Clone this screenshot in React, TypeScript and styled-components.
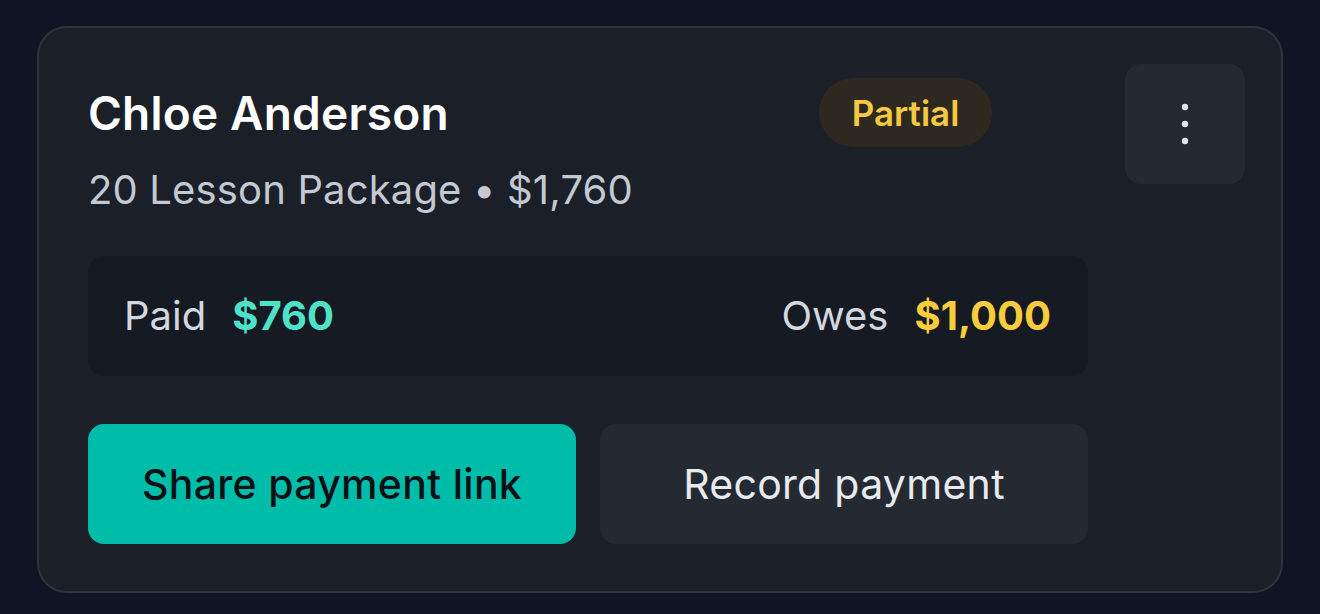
import React from "react";
import styled, { createGlobalStyle } from "styled-components";

const Global = createGlobalStyle`
  html, body { margin: 0; padding: 0; }
  body {
    background: #0f1524;
    font-family: Inter, "Noto Sans", "Liberation Sans", sans-serif;
    -webkit-font-smoothing: antialiased;
  }
`;

const Page = styled.div`
  width: 1320px;
  height: 614px;
  box-sizing: border-box;
  padding: 26px 37px 21px 37px;
  background: #0f1524;
`;

const Card = styled.div`
  box-sizing: border-box;
  height: 567px;
  display: flex;
  align-items: flex-start;
  gap: 37px;
  padding: 36px 36px 47px 49px;
  background: #1b1f27;
  border: 2px solid #2e333c;
  border-radius: 30px;
`;

const Main = styled.div`
  width: 1000px;
  display: flex;
  flex-direction: column;
  padding-top: 14px;
`;

const Header = styled.div`
  display: flex;
  align-items: flex-start;
  justify-content: space-between;
`;

const Info = styled.div`
  display: flex;
  flex-direction: column;
  padding-top: 10px;
`;

const Name = styled.div`
  font-size: 46px;
  line-height: 50px;
  font-weight: 600;
  color: #ffffff;
  letter-spacing: 0.2px;
`;

const Sub = styled.div`
  margin-top: 28px;
  font-size: 40px;
  line-height: 48px;
  font-weight: 400;
  color: #c3c8d1;
  letter-spacing: 0.15px;
`;

const Badge = styled.div`
  margin-right: 96px;
  height: 69px;
  width: 173px;
  box-sizing: border-box;
  border-radius: 35px;
  background: #2e2920;
  color: #f6c940;
  font-size: 35px;
  font-weight: 600;
  display: flex;
  align-items: center;
  justify-content: center;
`;

const Summary = styled.div`
  margin-top: 42px;
  height: 120px;
  box-sizing: border-box;
  padding: 0 37px 0 36px;
  border-radius: 16px;
  background: #161a22;
  display: flex;
  align-items: center;
  justify-content: space-between;
`;

const Stat = styled.div`
  display: flex;
  align-items: baseline;
  gap: 26px;
  font-size: 40px;
  line-height: 48px;
`;

const Label = styled.span`
  color: #d3d7df;
  font-weight: 400;
`;

const Amount = styled.span<{ $tone: "teal" | "yellow" }>`
  font-weight: 700;
  color: ${(p) => (p.$tone === "teal" ? "#4fe2ca" : "#f7cd3c")};
`;

const Actions = styled.div`
  margin-top: 48px;
  display: grid;
  grid-template-columns: 1fr 1fr;
  gap: 24px;
`;

const Button = styled.button<{ $primary?: boolean }>`
  height: 120px;
  border: none;
  border-radius: 16px;
  font-family: inherit;
  font-size: 41px;
  letter-spacing: 0.3px;
  font-weight: ${(p) => (p.$primary ? 500 : 400)};
  background: ${(p) => (p.$primary ? "#00bda9" : "#252a32")};
  color: ${(p) => (p.$primary ? "#0b1014" : "#e8eaee")};
  cursor: pointer;
`;

const MenuButton = styled.button`
  flex: none;
  width: 120px;
  height: 120px;
  border: none;
  border-radius: 16px;
  background: #252a32;
  display: flex;
  align-items: center;
  justify-content: center;
  padding: 0;
`;

export default function App() {
  return (
    <>
      <Global />
      <Page>
        <Card>
          <Main>
            <Header>
              <Info>
                <Name>Chloe Anderson</Name>
                <Sub>20 Lesson Package • $1,760</Sub>
              </Info>
              <Badge>Partial</Badge>
            </Header>
            <Summary>
              <Stat>
                <Label>Paid</Label>
                <Amount $tone="teal">$760</Amount>
              </Stat>
              <Stat>
                <Label>Owes</Label>
                <Amount $tone="yellow">$1,000</Amount>
              </Stat>
            </Summary>
            <Actions>
              <Button $primary>Share payment link</Button>
              <Button>Record payment</Button>
            </Actions>
          </Main>
          <MenuButton aria-label="More">
            <svg width="8" height="42" viewBox="0 0 8 42">
              <circle cx="4" cy="4" r="3.2" fill="#dfe4ee" />
              <circle cx="4" cy="21" r="3.2" fill="#dfe4ee" />
              <circle cx="4" cy="38" r="3.2" fill="#dfe4ee" />
            </svg>
          </MenuButton>
        </Card>
      </Page>
    </>
  );
}
